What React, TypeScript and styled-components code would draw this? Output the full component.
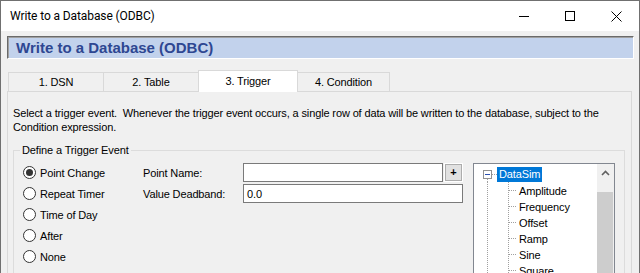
import React from 'react'
import styled, { createGlobalStyle } from 'styled-components'

const GlobalStyle = createGlobalStyle`
  html, body {
    margin: 0;
    padding: 0;
    background: #f0f0f0;
    overflow: hidden;
  }
  body {
    font-family: "Liberation Sans", Arial, sans-serif;
    font-size: 11px;
    letter-spacing: -0.13px;
    color: #000;
  }
`

const tabs = ['1. DSN', '2. Table', '3. Trigger', '4. Condition']
const tabWidths = [96, 96, 100, 93]
const triggers = ['Point Change', 'Repeat Timer', 'Time of Day', 'After', 'None']
const points = ['Amplitude', 'Frequency', 'Offset', 'Ramp', 'Sine', 'Square', 'Triangle']

export default function App() {
  return (
    <>
      <GlobalStyle />
      <Window>
        <TitleBar>
          <TitleText>Write to a Database (ODBC)</TitleText>
          <CaptionButton>
            <svg width="10" height="10" viewBox="0 0 10 10">
              <path d="M0 5.5H10" stroke="#000" strokeWidth="1" />
            </svg>
          </CaptionButton>
          <CaptionButton>
            <svg width="10" height="10" viewBox="0 0 10 10">
              <rect x="0.5" y="0.5" width="9" height="9" fill="none" stroke="#000" strokeWidth="1" />
            </svg>
          </CaptionButton>
          <CaptionButton>
            <svg width="11" height="11" viewBox="0 0 11 11">
              <path d="M0.5 0.5L10.5 10.5M10.5 0.5L0.5 10.5" stroke="#000" strokeWidth="1" />
            </svg>
          </CaptionButton>
        </TitleBar>

        <Body>
          <Banner>Write to a Database (ODBC)</Banner>

          <TabStrip>
            {tabs.map((t, i) => (
              <Tab key={t} $active={i === 2} $width={tabWidths[i]}>{t}</Tab>
            ))}
          </TabStrip>

          <Panel>
            <Description>
              Select a trigger event.&nbsp; Whenever the trigger event occurs, a single row of data will be written to the database, subject to the<br />
              Condition expression.
            </Description>

            <GroupBox>
              <Legend>Define a Trigger Event</Legend>
              <GroupContent>
                <RadioColumn>
                  {triggers.map((t, i) => (
                    <RadioRow key={t}>
                      <RadioCircle $checked={i === 0} />
                      <span>{t}</span>
                    </RadioRow>
                  ))}
                </RadioColumn>

                <FormGrid>
                  <FieldLabel>Point Name:</FieldLabel>
                  <FieldRow>
                    <TextBox $width={200} />
                    <PlusButton>+</PlusButton>
                  </FieldRow>
                  <FieldLabel>Value Deadband:</FieldLabel>
                  <FieldRow>
                    <TextBox $width={220}>0.0</TextBox>
                  </FieldRow>
                </FormGrid>

                <TreeView>
                  <TreeContent>
                    <TreeRow>
                      <svg width="23" height="16" viewBox="0 0 23 16" shapeRendering="crispEdges">
                        <rect x="9.5" y="4.5" width="8" height="8" fill="#fff" stroke="#919191" />
                        <path d="M11 8.5H16" stroke="#2a4fb0" />
                        <path d="M18 8.5H23" stroke="#a0a0a0" strokeDasharray="1 1" />
                        <path d="M13.5 13V16" stroke="#a0a0a0" strokeDasharray="1 1" />
                      </svg>
                      <RootLabel>DataSim</RootLabel>
                    </TreeRow>
                    {points.map(p => (
                      <TreeRow key={p}>
                        <svg width="44" height="16" viewBox="0 0 44 16" shapeRendering="crispEdges">
                          <path d="M13.5 0V16" stroke="#a0a0a0" strokeDasharray="1 1" />
                          <path d="M34.5 0V16" stroke="#a0a0a0" strokeDasharray="1 1" />
                          <path d="M35 8.5H43" stroke="#a0a0a0" strokeDasharray="1 1" />
                        </svg>
                        <NodeLabel>{p}</NodeLabel>
                      </TreeRow>
                    ))}
                  </TreeContent>
                  <ScrollBar>
                    <ScrollArrow>
                      <svg width="9" height="6" viewBox="0 0 9 6">
                        <path d="M1 5L4.5 1.5L8 5" fill="none" stroke="#606060" strokeWidth="1.6" />
                      </svg>
                    </ScrollArrow>
                    <ScrollThumb />
                  </ScrollBar>
                </TreeView>
              </GroupContent>
            </GroupBox>
          </Panel>
        </Body>
      </Window>
    </>
  )
}

const Window = styled.div`
  width: 640px;
  height: 273px;
  box-sizing: border-box;
  border: 1px solid #707070;
  border-bottom: none;
  display: flex;
  flex-direction: column;
  overflow: hidden;
  background: #f0f0f0;
`

const TitleBar = styled.div`
  height: 30px;
  flex-shrink: 0;
  display: flex;
  align-items: center;
  background: #fff;
`

const TitleText = styled.div`
  flex: 1;
  padding-left: 9px;
  font-family: Roboto, "Liberation Sans", sans-serif;
  font-size: 12px;
  letter-spacing: -0.1px;
  padding-bottom: 1px;
`

const CaptionButton = styled.div`
  width: 46px;
  height: 30px;
  display: flex;
  align-items: center;
  justify-content: center;
`

const Body = styled.div`
  flex: 1;
  display: flex;
  flex-direction: column;
  padding: 5px 5px 0 6px;
  min-height: 0;
`

const Banner = styled.div`
  height: 21px;
  flex-shrink: 0;
  display: flex;
  align-items: center;
  padding-left: 8px;
  background: #c2d2ec;
  border-top: 1px solid #6a6a6a;
  border-left: 1px solid #6a6a6a;
  border-bottom: 1px solid #fff;
  border-right: 1px solid #fff;
  box-shadow: inset 1px 1px 0 #a0a0a0;
  font-weight: bold;
  font-size: 15px;
  letter-spacing: 0;
  color: #2e4792;
`

const TabStrip = styled.div`
  margin-top: 11px;
  height: 21px;
  flex-shrink: 0;
  display: flex;
  align-items: flex-end;
  padding-left: 1px;
  position: relative;
  z-index: 1;
`

const Tab = styled.div<{ $active: boolean; $width: number }>`
  box-sizing: border-box;
  width: ${p => p.$width}px;
  height: ${p => (p.$active ? 22 : 19)}px;
  margin-left: -1px;
  margin-bottom: ${p => (p.$active ? -1 : 0)}px;
  display: flex;
  align-items: center;
  justify-content: center;
  padding-bottom: ${p => (p.$active ? 2 : 0)}px;
  background: ${p => (p.$active ? '#fff' : '#f0f0f0')};
  border: 1px solid #d9d9d9;
  border-bottom: none;
  position: relative;
  z-index: ${p => (p.$active ? 2 : 1)};
  &:first-child {
    margin-left: 0;
  }
`

const Panel = styled.div`
  flex: 1;
  margin-right: 2px;
  border: 1px solid #d9d9d9;
  border-bottom: none;
  padding: 14px 6px 0 5px;
  min-height: 0;
`

const Description = styled.div`
  line-height: 14px;
  white-space: nowrap;
`

const GroupBox = styled.fieldset`
  margin: 10px 0 0 0;
  padding: 0;
  border: 1px solid #dcdcdc;
  min-width: 0;
`

const Legend = styled.legend`
  margin-left: 6px;
  padding: 0 2px;
  line-height: 13px;
`

const GroupContent = styled.div`
  display: flex;
  align-items: flex-start;
  padding: 5px 9px 0 9px;
`

const RadioColumn = styled.div`
  width: 120px;
  display: flex;
  flex-direction: column;
`

const RadioRow = styled.div`
  height: 21px;
  display: flex;
  align-items: center;
  gap: 4px;
`

const RadioCircle = styled.span<{ $checked: boolean }>`
  box-sizing: border-box;
  width: 13px;
  height: 13px;
  border-radius: 50%;
  border: 1px solid #333;
  background: #fff;
  display: flex;
  align-items: center;
  justify-content: center;
  &::after {
    content: '';
    width: 7px;
    height: 7px;
    border-radius: 50%;
    background: ${p => (p.$checked ? '#333' : 'transparent')};
  }
`

const FormGrid = styled.div`
  width: 320px;
  display: grid;
  grid-template-columns: 100px 220px;
  grid-auto-rows: 21px;
  align-items: center;
`

const FieldLabel = styled.div``

const FieldRow = styled.div`
  display: flex;
  align-items: center;
  gap: 1px;
`

const TextBox = styled.div<{ $width: number }>`
  box-sizing: border-box;
  width: ${p => p.$width}px;
  height: 19px;
  border: 1px solid #7a7a7a;
  background: #fff;
  padding: 1px 3px 0;
  display: flex;
  align-items: center;
`

const PlusButton = styled.div`
  box-sizing: border-box;
  width: 19px;
  height: 19px;
  border: 1px solid #fff;
  box-shadow: inset 0 0 0 1px #adadad;
  background: #e1e1e1;
  display: flex;
  align-items: center;
  justify-content: center;
  font-weight: bold;
  font-size: 11px;
  padding-bottom: 1px;
`

const TreeView = styled.div`
  box-sizing: border-box;
  width: 142px;
  height: 130px;
  margin: 1px 0 0 10px;
  border: 1px solid #828790;
  background: #fff;
  display: flex;
`

const TreeContent = styled.div`
  flex: 1;
  padding-top: 2px;
  overflow: hidden;
`

const TreeRow = styled.div`
  height: 16px;
  display: flex;
  align-items: center;
  white-space: nowrap;
  svg {
    flex-shrink: 0;
    align-self: stretch;
  }
`

const RootLabel = styled.span`
  background: #0078d7;
  color: #fff;
  padding: 0 2px;
  line-height: 15px;
`

const NodeLabel = styled.span`
  padding: 2px 0 0 1px;
`

const ScrollBar = styled.div`
  width: 17px;
  display: flex;
  flex-direction: column;
  background: #f0f0f0;
`

const ScrollArrow = styled.div`
  height: 17px;
  display: flex;
  align-items: center;
  justify-content: center;
`

const ScrollThumb = styled.div`
  flex: 1;
  margin: 11px 1px 0 0;
  background: #cdcdcd;
`
